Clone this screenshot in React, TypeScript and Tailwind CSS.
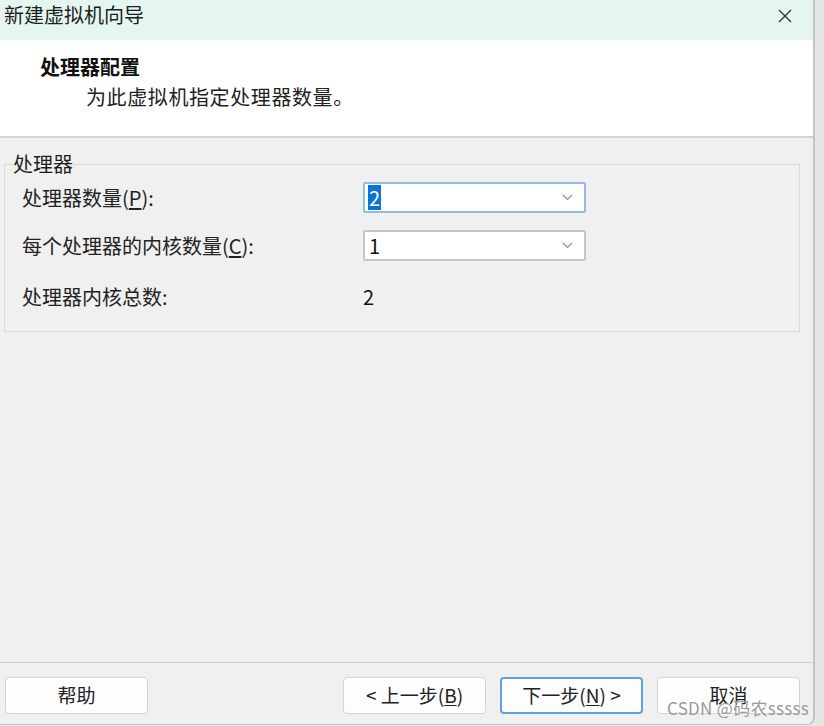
import React from 'react';

const font = { fontFamily: '"Noto Sans CJK SC", "Liberation Sans", sans-serif' };

function Chevron() {
  return (
    <svg width="11" height="7" viewBox="0 0 11 7" className="shrink-0">
      <path d="M1 1l4.5 4.5L10 1" fill="none" stroke="#8a8a8a" strokeWidth="1.2" />
    </svg>
  );
}

function Combo({ value, focused }: { value: string; focused?: boolean }) {
  return (
    <div
      className={
        'flex items-center justify-between w-[223px] h-[31px] bg-white rounded-[2px] pl-[3px] pr-[11px] ' +
        (focused ? 'border-2 border-[#8cbcec]' : 'border-2 border-[#c6c6c6]')
      }
    >
      {focused ? (
        <span className="bg-[#0a74d4] text-white leading-[25px] px-[1px] text-[20px]">{value}</span>
      ) : (
        <span className="text-[#111] leading-[25px] px-[1px] text-[20px]">{value}</span>
      )}
      <Chevron />
    </div>
  );
}

function Btn({ children, primary }: { children: React.ReactNode; primary?: boolean }) {
  return (
    <button
      className={
        'h-[37px] w-[143px] rounded-[4px] bg-[#fdfdfd] text-[19px] text-[#222] flex items-center justify-center ' +
        (primary ? 'border-2 border-[#62a0e0]' : 'border border-[#d4d4d4]')
      }
    >
      {children}
    </button>
  );
}

export default function App() {
  return (
    <div style={font} className="w-[824px] h-[726px] bg-[#e6e6e6] flex overflow-hidden">
      <div className="relative w-[815px] h-[725px] flex flex-col bg-[#f0f0f0] border-r-2 border-b border-[#c4c4c4] rounded-br-[8px] overflow-hidden">
        {/* title bar */}
        <div className="h-[40px] bg-[#e4f6ef] flex items-start justify-between shrink-0">
          <span className="pl-[4px] pt-[2px] text-[20px] leading-[26px] text-[#1e1e1e]">新建虚拟机向导</span>
          <svg width="16" height="16" viewBox="0 0 16 16" className="mt-[8px] mr-[20px]">
            <path d="M2 2l12 12M14 2L2 14" stroke="#333" strokeWidth="1.4" fill="none" />
          </svg>
        </div>

        {/* header */}
        <div className="h-[96px] bg-white shrink-0 pl-[40px] pt-[14px] text-[#111]">
          <div className="text-[20px] font-bold leading-[26px]">处理器配置</div>
          <div className="pl-[46px] pt-[4px] text-[20px] leading-[26px] tracking-[0.6px] text-[#222]">为此虚拟机指定处理器数量。</div>
        </div>
        <div className="h-[2px] bg-[#d2d2d2] shrink-0" />

        {/* body */}
        <div className="flex-1 pt-[14px]">
          <fieldset className="ml-[4px] w-[796px] border border-[#dadada] px-[8px] pb-[22px] text-[#222]">
            <legend className="text-[20px] leading-[24px] text-[#1e1e1e]">处理器</legend>
            <div className="grid grid-cols-[341px_1fr] items-center pl-[9px] pt-[6px] text-[20px] leading-[24px]">
              <span>
                处理器数量(<span className="underline underline-offset-2">P</span>):
              </span>
              <Combo value="2" focused />
              <span className="mt-[17px]">
                每个处理器的内核数量(<span className="underline underline-offset-2">C</span>):
              </span>
              <div className="mt-[17px]">
                <Combo value="1" />
              </div>
              <span className="mt-[24px]">处理器内核总数:</span>
              <span className="mt-[24px] text-[#111]">2</span>
            </div>
          </fieldset>
        </div>

        {/* footer */}
        <div className="h-[1px] bg-[#d0d0d0] shrink-0" />
        <div className="h-[61px] shrink-0 flex items-start pt-[14px] pl-[5px] pr-[13px]">
          <Btn>帮助</Btn>
          <div className="flex-1" />
          <div className="flex gap-[14px]">
            <Btn>
              &lt; 上一步(<span className="underline underline-offset-2">B</span>)
            </Btn>
            <Btn primary>
              下一步(<span className="underline underline-offset-2">N</span>) &gt;
            </Btn>
            <Btn>取消</Btn>
          </div>
        </div>

        <div className="absolute left-[667px] top-[697px] text-[17px] leading-[22px] text-[#9a9a9a] tracking-[0.3px]">
          CSDN @码农sssss
        </div>
      </div>
    </div>
  );
}
